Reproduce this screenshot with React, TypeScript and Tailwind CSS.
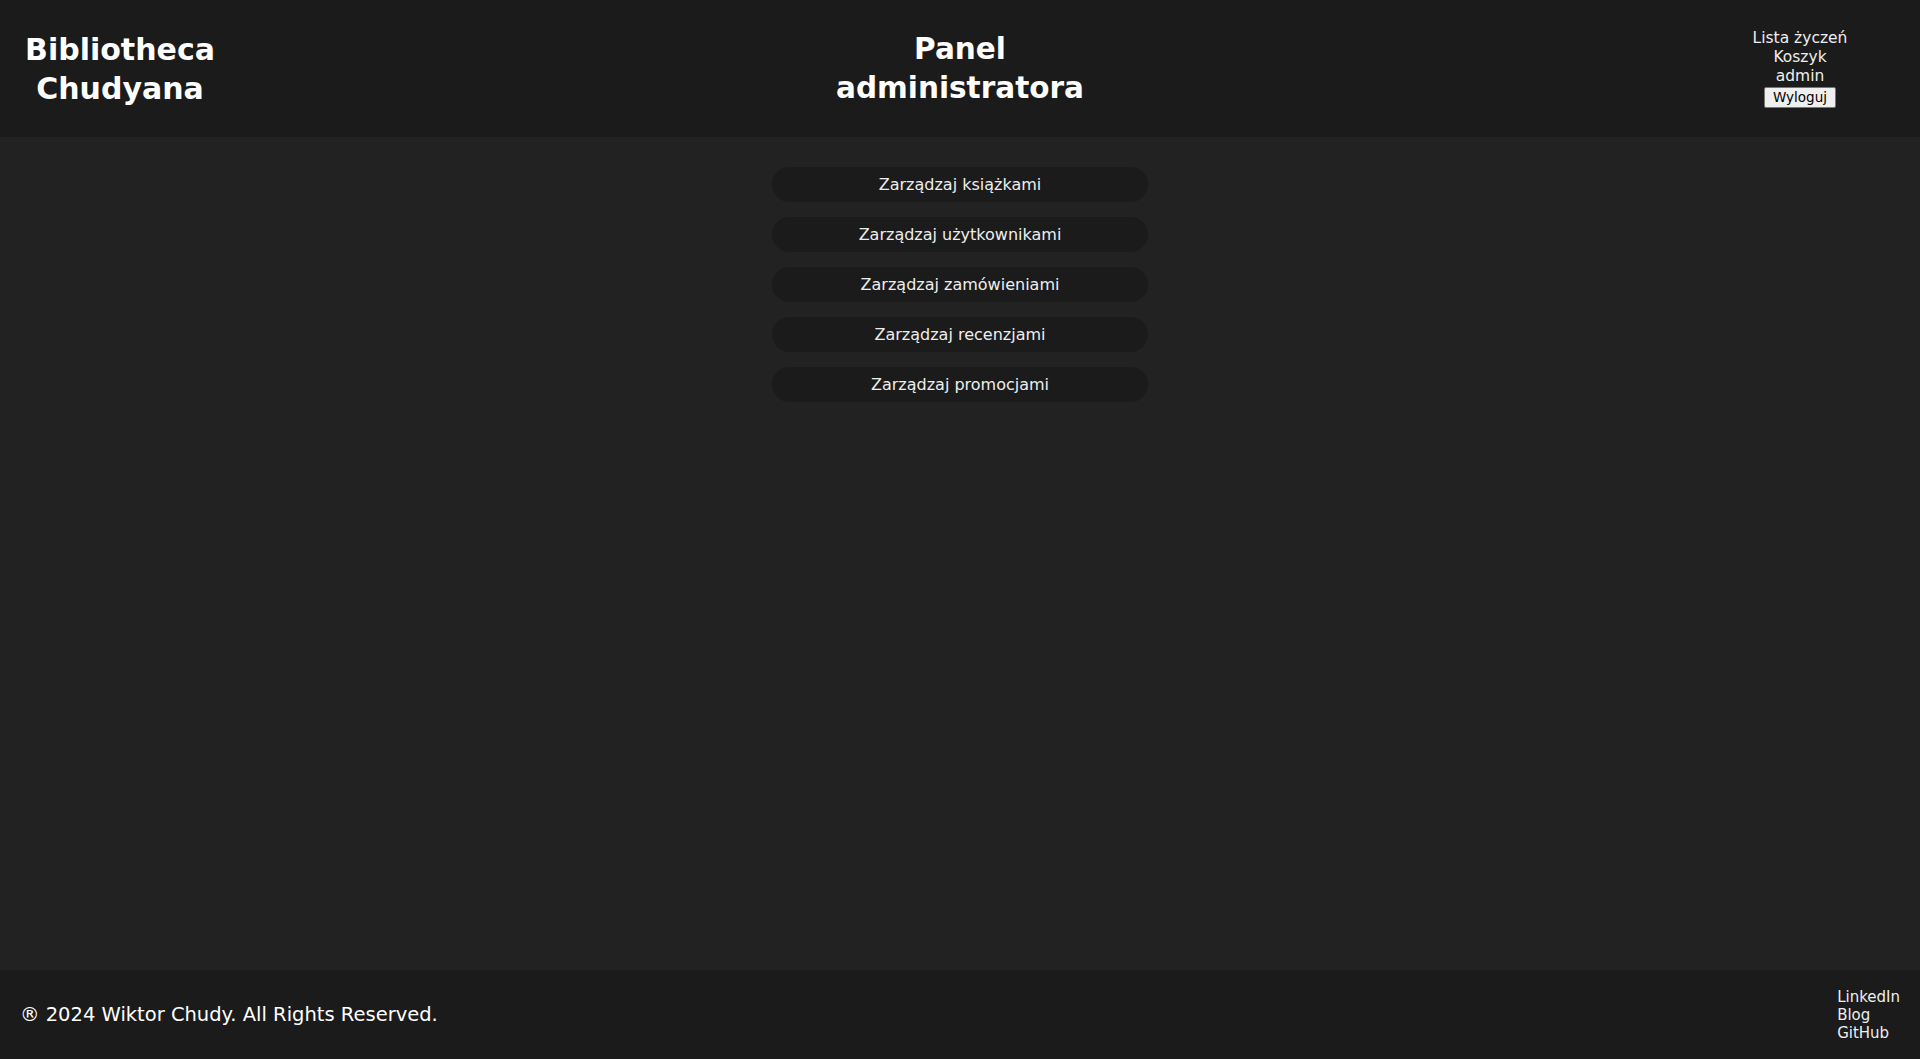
export default function App() {
  const links = [
    "Zarządzaj książkami",
    "Zarządzaj użytkownikami",
    "Zarządzaj zamówieniami",
    "Zarządzaj recenzjami",
    "Zarządzaj promocjami",
  ]

  return (
    <div className="min-h-screen flex flex-col bg-[#222222] text-white font-['DejaVu_Sans',sans-serif]">
      {/* Header */}
      <header className="h-[137px] bg-[#1b1b1b] flex items-center justify-between">
        <div className="w-[240px] text-center">
          <h1 className="text-[30px] leading-[39px] font-bold">Bibliotheca Chudyana</h1>
        </div>
        <div className="w-[260px] text-center">
          <h1 className="text-[29.5px] leading-[39px] font-bold">Panel administratora</h1>
        </div>
        <nav className="w-[240px] flex flex-col items-center text-[15.5px] leading-[19px] text-[#eeeeee]">
          <a>Lista życzeń</a>
          <a>Koszyk</a>
          <span>admin</span>
          <button className="mt-[1px] h-[21px] px-[8px] bg-[#efefef] text-black text-[13.5px] leading-none border border-[#767676] rounded-[2px]">
            Wyloguj
          </button>
        </nav>
      </header>

      {/* Admin menu */}
      <main className="flex-1 flex flex-col items-center pt-[30px] gap-[15px]">
        {links.map((label) => (
          <a
            key={label}
            className="w-[376px] h-[35px] rounded-full bg-[#1b1b1b] flex items-center justify-center text-[16px] text-[#eeeeee]"
          >
            {label}
          </a>
        ))}
      </main>

      {/* Footer */}
      <footer className="h-[89px] bg-[#1b1b1b] flex items-center justify-between pl-[20px] pr-[20px]">
        <p className="text-[19.5px]">® 2024 Wiktor Chudy. All Rights Reserved.</p>
        <div className="flex flex-col text-[15px] leading-[18px] text-[#eeeeee]">
          <a>LinkedIn</a>
          <a>Blog</a>
          <a>GitHub</a>
        </div>
      </footer>
    </div>
  )
}
